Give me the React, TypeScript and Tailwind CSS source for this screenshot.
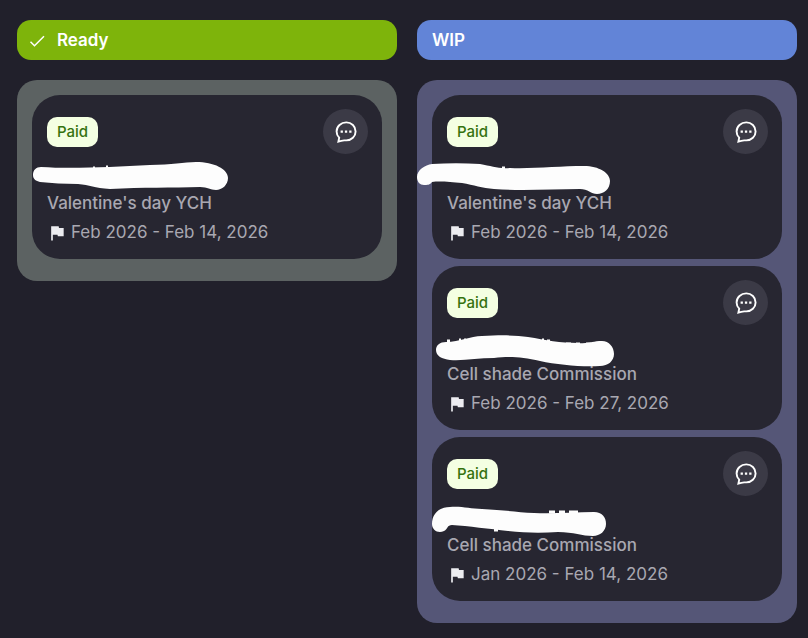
import { MdFlag } from "react-icons/md";

interface Mark {
  path: string;
  specks: string;
}

interface Commission {
  id: number;
  title: string;
  dates: string;
  mark: Mark;
}

interface Column {
  id: string;
  label: string;
  done: boolean;
  headerClass: string;
  panelClass: string;
  items: Commission[];
}

const columns: Column[] = [
  {
    id: "ready",
    label: "Ready",
    done: true,
    headerClass: "bg-[#7eb40b] pl-[10px]",
    panelClass: "bg-[#5c6262]",
    items: [
      {
        id: 1,
        title: "Valentine's day YCH",
        dates: "Feb 2026 - Feb 14, 2026",
        mark: {
          path: "M1 80C1 75 4 72 9 72C40 74 80 72 118 70C140 70 152 67 164 67C182 67 196 74 196 83C196 90 190 95 184 95C178 95 176 92 168 92C140 93 110 92 78 94C62 93 58 90 46 89C32 89 20 88 8 87C4 86 1 84 1 80Z",
          specks: "M61 73h2M74 72h2",
        },
      },
    ],
  },
  {
    id: "wip",
    label: "WIP",
    done: false,
    headerClass: "bg-[#6284d7] pl-[15px]",
    panelClass: "bg-[#555677]",
    items: [
      {
        id: 2,
        title: "Valentine's day YCH",
        dates: "Feb 2026 - Feb 14, 2026",
        mark: {
          path: "M-15 82C-15 75 -7 70 0 69C16 68 32 68 48 69C60 71 66 74 78 73C100 74 128 71 152 71C167 71 178 78 178 86C178 94 172 99 165 99C159 99 156 94 148 94C120 94 90 96 62 94C50 93 42 90 30 88C18 87 8 86 0 87C-2 90 -5 90 -8 90C-12 90 -15 87 -15 82Z",
          specks: "M70 73h3",
        },
      },
      {
        id: 3,
        title: "Cell shade Commission",
        dates: "Feb 2026 - Feb 27, 2026",
        mark: {
          path: "M4 84C4 79 8 76 14 76C28 76 38 70 50 70C68 69 84 69 96 71C114 74 128 77 146 77C158 78 160 75 170 75C177 75 182 81 182 88C182 95 176 100 168 100C150 101 126 99 108 95C90 91 78 90 62 92C46 92 32 95 18 94C10 93 4 90 4 84Z",
          specks: "M15 75h3M27 74h2M32 74h2M110 74h2M115 75h3M134 78h5M144 78h4M154 78h5",
        },
      },
      {
        id: 4,
        title: "Cell shade Commission",
        dates: "Jan 2026 - Feb 14, 2026",
        mark: {
          path: "M0 87C0 77 7 70 18 70C30 69 38 72 50 72C70 73 84 75 102 76C122 77 142 75 162 75C170 75 174 80 174 87C174 94 168 99 161 99C150 99 142 95 126 95C110 96 94 96 76 94C58 92 36 89 20 88C15 88 16 92 12 94C6 97 0 93 0 87Z",
          specks: "M62 93h4M117 75h6M127 75h6M137 75h9",
        },
      },
    ],
  },
];

function CheckIcon() {
  return (
    <svg viewBox="0 0 20 20" className="h-5 w-5" fill="none" stroke="currentColor" strokeWidth="1.5" aria-hidden="true">
      <path d="M3.5 10.8L7.5 14.8L17 5.2" />
    </svg>
  );
}

function ChatIcon() {
  return (
    <svg viewBox="0 0 24 24" className="h-6 w-6" fill="none" stroke="currentColor" strokeWidth="1.9" aria-hidden="true">
      <path
        strokeLinejoin="miter"
        d="M12.3 2.4C17.5 2.4 21.6 6.4 21.6 11.4C21.6 16.4 17.5 20.4 12.3 20.4H10.2C8.4 20.6 6.4 21 4.4 21.6L5.2 17.7C3.5 16 2.6 13.8 2.6 11.4C2.6 6.4 7.1 2.4 12.3 2.4Z"
      />
      <path strokeWidth="2.2" d="M6.6 11.6h2.3M10.9 11.6h2.3M15.2 11.6h2.3" />
    </svg>
  );
}

function CommissionCard({ item }: { item: Commission }) {
  return (
    <article className="relative rounded-[28px] bg-[#272631] px-[15px] pt-[14px] pb-3">
      <div className="-mr-px mb-[6px] flex items-center justify-between">
        <span className="flex h-[30px] items-center rounded-[10px] bg-[#f4ffe2] px-[10px] pt-px text-[15px] font-medium text-[#35720f]">
          Paid
        </span>
        <button
          type="button"
          aria-label="Open chat"
          className="flex h-[45px] w-[45px] items-center justify-center rounded-full bg-[#3b3a46] text-white"
        >
          <ChatIcon />
        </button>
      </div>

      {/* Client name, painted over */}
      <div className="h-[29px]" />
      <svg
        viewBox="0 0 200 164"
        className="pointer-events-none absolute top-0 left-0 h-[164px] w-[200px] overflow-visible"
        aria-hidden="true"
      >
        <path d={item.mark.path} fill="#fdfdfd" />
        <path d={item.mark.specks} stroke="#fdfdfd" strokeWidth="3" />
      </svg>

      <h3 className="text-[17px] leading-[29px] font-medium text-[#a9a8b1]">{item.title}</h3>
      <p className="flex items-center gap-1 text-[17px] leading-[29px] text-[#a9a8b1]">
        <MdFlag className="h-5 w-5 text-[#ececf0]" />
        {item.dates}
      </p>
    </article>
  );
}

export default function App() {
  return (
    <main className="grid min-h-screen grid-cols-2 items-start gap-5 bg-[#21202b] pt-5 pr-[11px] pl-[17px] font-['Inter',sans-serif]">
      {columns.map((column) => (
        <section key={column.id}>
          <h2
            className={`mb-5 flex h-10 items-center gap-[10px] rounded-[14px] pt-px text-[17px] font-semibold text-white ${column.headerClass}`}
          >
            {column.done && <CheckIcon />}
            {column.label}
          </h2>
          <div className={`flex flex-col gap-[7px] rounded-[20px] px-[15px] pt-[15px] pb-[22px] ${column.panelClass}`}>
            {column.items.map((item) => (
              <CommissionCard key={item.id} item={item} />
            ))}
          </div>
        </section>
      ))}
    </main>
  );
}
